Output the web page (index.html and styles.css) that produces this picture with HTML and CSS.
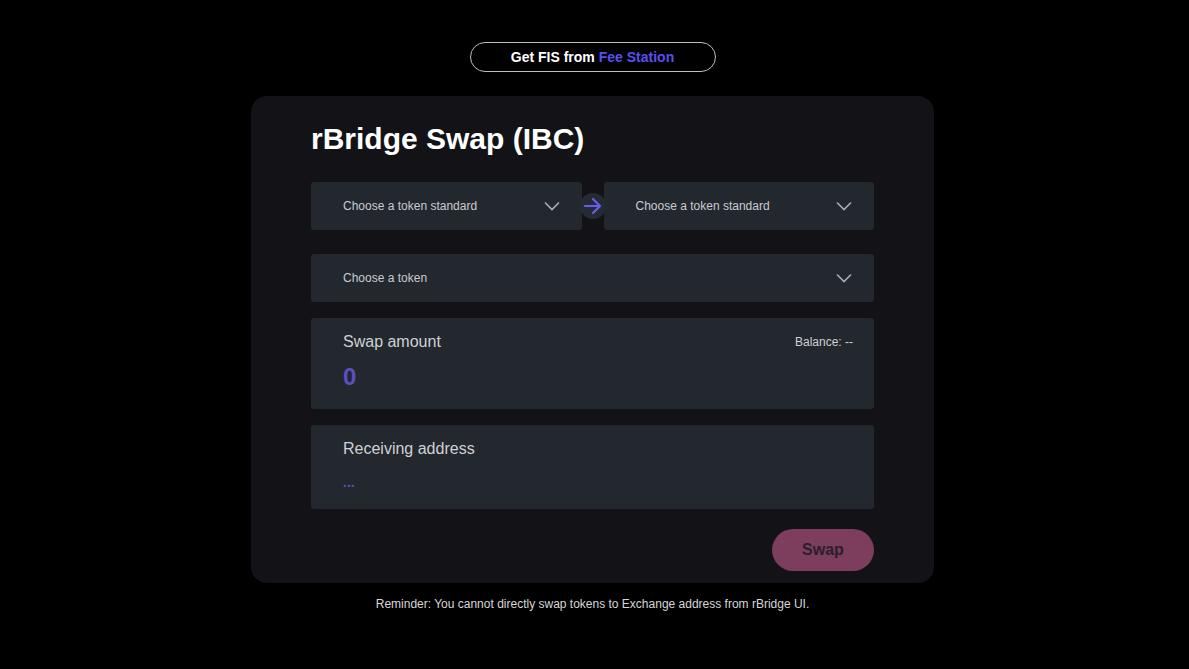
FILE: index.html
```html
<!DOCTYPE html>
<html lang="en">
<head>
    <meta charset="UTF-8">
    <meta name="viewport" content="width=device-width, initial-scale=1.0">
    <title>rBridge Swap (IBC)</title>
    <link rel="stylesheet" href="styles.css">
</head>
<body>
    <div class="page">
        <a class="fee-link" href="#">Get FIS from <span class="accent">Fee Station</span></a>

        <div class="card">
            <h1>rBridge Swap (IBC)</h1>

            <div class="standard-row">
                <div class="select">
                    <span>Choose a token standard</span>
                    <svg class="chevron" width="16" height="10" viewBox="0 0 16 10"><path d="M1 1.5l7 7 7-7" fill="none" stroke="#a9adb5" stroke-width="1.6"/></svg>
                </div>
                <div class="arrow-dot">
                    <svg width="20" height="18" viewBox="0 0 20 18"><path d="M2 9h15M10 2l7 7-7 7" fill="none" stroke="#6a5cf0" stroke-width="2.2" stroke-linecap="round" stroke-linejoin="round"/></svg>
                </div>
                <div class="select">
                    <span>Choose a token standard</span>
                    <svg class="chevron" width="16" height="10" viewBox="0 0 16 10"><path d="M1 1.5l7 7 7-7" fill="none" stroke="#a9adb5" stroke-width="1.6"/></svg>
                </div>
            </div>

            <div class="select wide">
                <span>Choose a token</span>
                <svg class="chevron" width="16" height="10" viewBox="0 0 16 10"><path d="M1 1.5l7 7 7-7" fill="none" stroke="#a9adb5" stroke-width="1.6"/></svg>
            </div>

            <div class="field amount">
                <div class="field-head">
                    <span class="field-label">Swap amount</span>
                    <span class="balance">Balance: --</span>
                </div>
                <div class="amount-value">0</div>
            </div>

            <div class="field address">
                <div class="field-label">Receiving address</div>
                <div class="address-value">...</div>
            </div>

            <div class="actions">
                <button class="swap-btn">Swap</button>
            </div>
        </div>

        <p class="reminder">Reminder: You cannot directly swap tokens to Exchange address from rBridge UI.</p>
    </div>
</body>
</html>
```

FILE: styles.css
```css
body {
    margin: 0;
    background-color: #000;
    font-family: "Liberation Sans", Arial, sans-serif;
    color: #fff;
}
.page {
    display: flex;
    flex-direction: column;
    align-items: center;
    padding: 42px 4px 0 0;
}
.fee-link {
    display: flex;
    align-items: center;
    justify-content: center;
    box-sizing: border-box;
    width: 246px;
    height: 30px;
    border: 1px solid #bfbfbf;
    border-radius: 15px;
    color: #fff;
    font-size: 14px;
    font-weight: bold;
    text-decoration: none;
}
.fee-link .accent {
    color: #5a4ff0;
    margin-left: 4px;
}
.card {
    box-sizing: border-box;
    width: 683px;
    margin-top: 24px;
    padding: 24px 60px 12px;
    background-color: #121217;
    border-radius: 16px;
}
h1 {
    margin: 0 0 24px;
    font-size: 30px;
    line-height: 38px;
    font-weight: bold;
}
.standard-row {
    display: flex;
    align-items: center;
}
.standard-row .select {
    flex: 1;
}
.arrow-dot {
    position: relative;
    z-index: 1;
    display: flex;
    align-items: center;
    justify-content: center;
    width: 26px;
    height: 26px;
    margin: 0 -2px;
    border-radius: 50%;
    background-color: #262a33;
}
.select {
    display: flex;
    align-items: center;
    justify-content: space-between;
    height: 48px;
    padding: 0 22px 0 32px;
    background-color: #23272e;
    border-radius: 3px;
    font-size: 12px;
    color: #c9ccd1;
}
.select.wide {
    margin-top: 24px;
}
.field {
    box-sizing: border-box;
    margin-top: 16px;
    padding: 15px 21px 0 32px;
    background-color: #23272e;
    border-radius: 3px;
}
.amount {
    height: 91px;
}
.address {
    height: 84px;
}
.field-head {
    display: flex;
    justify-content: space-between;
    align-items: center;
}
.field-label {
    font-size: 16px;
    line-height: 18px;
    color: #cfd1d5;
}
.balance {
    font-size: 12px;
    color: #cfd1d5;
}
.amount-value {
    margin-top: 12px;
    font-size: 24px;
    font-weight: bold;
    color: #5b50c2;
}
.address-value {
    margin-top: 16px;
    font-size: 14px;
    font-weight: bold;
    color: #5b50c2;
}
.actions {
    display: flex;
    justify-content: flex-end;
    margin-top: 20px;
}
.swap-btn {
    width: 102px;
    height: 42px;
    border: none;
    border-radius: 21px;
    background-color: #7d3d5c;
    color: #2b1f29;
    font-family: inherit;
    font-size: 16px;
    font-weight: bold;
}
.reminder {
    margin: 14px 0 0;
    font-size: 12px;
    color: #d6d6d6;
}
```
